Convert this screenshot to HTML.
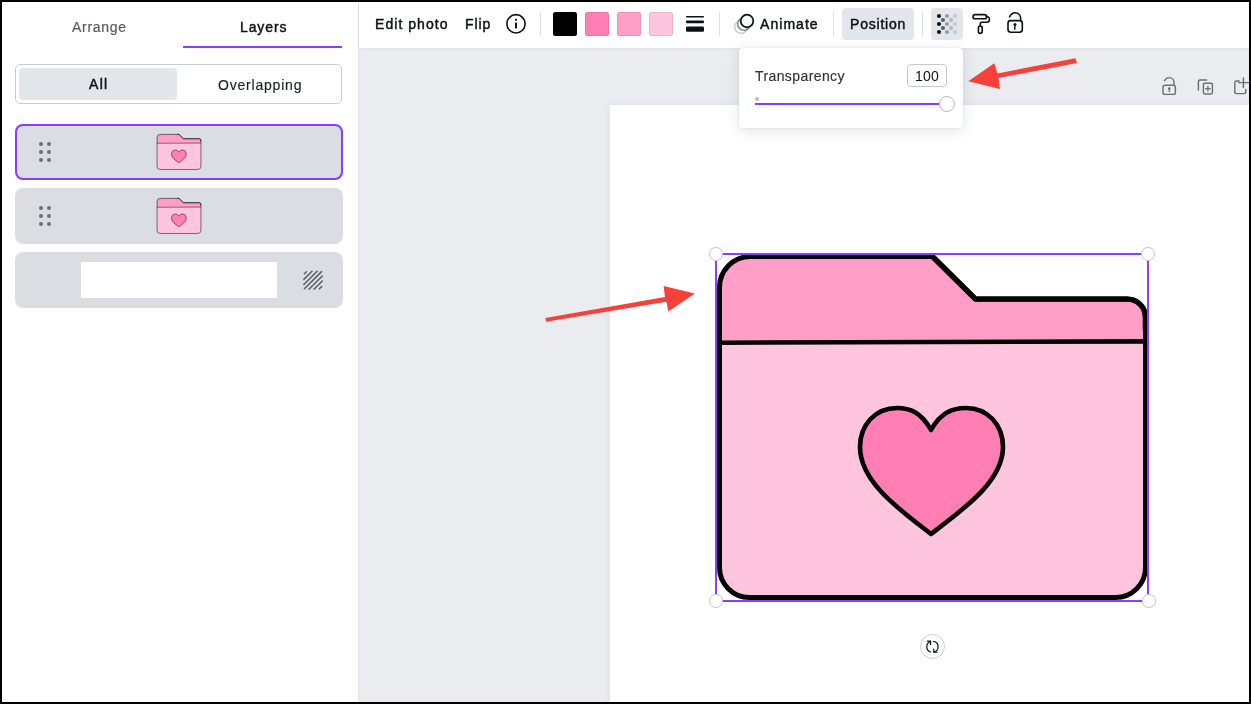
<!DOCTYPE html>
<html><head><meta charset="utf-8">
<style>
*{box-sizing:border-box;margin:0;padding:0}
html,body{width:1251px;height:704px;overflow:hidden;background:#ebecf0}
body{position:relative;font-family:"Liberation Sans",sans-serif;color:#0d1216}
.abs{position:absolute}
#border{position:absolute;left:0;top:0;width:1251px;height:704px;border:2px solid #000;z-index:50}
#left{position:absolute;left:0;top:0;width:359px;height:704px;background:#fff;border-right:1px solid #e3e5e8}
#toolbar{position:absolute;left:359px;top:0;width:892px;height:48px;background:#fff;box-shadow:0 1px 4px rgba(0,0,0,.05)}
.t{position:absolute;white-space:nowrap;line-height:1;will-change:transform}
.sep{position:absolute;width:1px;height:24px;top:12px;background:#dcdfe3}
.sw{position:absolute;top:12px;width:24px;height:24px;border-radius:2.5px;box-shadow:inset 0 0 0 1px rgba(0,0,0,.08)}
.item{position:absolute;left:15px;width:328px;height:56px;border-radius:8px;background:#dadde1}
.handle{width:14px;height:14px;border-radius:50%;background:#fff;border:1.3px solid #c3c7cd;box-shadow:0 0 3px rgba(0,0,0,.05)}
.dot{position:absolute;width:4px;height:4px;border-radius:50%;background:#6b7078}
</style></head>
<body>
<svg width="0" height="0" style="position:absolute">
  <defs>
    <g id="folder">
      <path d="M719.5,342.7 L719.5,287.5 A31,31 0 0 1 750.5,256.5 L932,256.5 L975,299 L1127.5,299 A18,18 0 0 1 1145.5,317 L1145.5,341.4 Z" fill="#ff9fc8"/>
      <path d="M719.5,342.7 L1145.5,341.4 L1145.5,567.5 A30,30 0 0 1 1115.5,597.5 L749.5,597.5 A30,30 0 0 1 719.5,567.5 Z" fill="#ffc4de"/>
      <path d="M750.5,256.5 L932,256.5 L975,299 L1127.5,299 A18,18 0 0 1 1145.5,317 L1145.5,567.5 A30,30 0 0 1 1115.5,597.5 L749.5,597.5 A30,30 0 0 1 719.5,567.5 L719.5,287.5 A31,31 0 0 1 750.5,256.5 Z" fill="none" stroke="#000" stroke-width="5" stroke-linejoin="round"/>
      <path d="M719.5,342.7 L1145.5,341.4" stroke="#000" stroke-width="4.6"/>
      <path d="M915,256.5 L932.8,256.5 L975.8,299.2 L1127.5,299.2 A18,18 0 0 1 1145.3,317.2 L1145.3,330" fill="none" stroke="#000" stroke-width="5.2" stroke-linejoin="miter"/>
      <path d="M931,430 C921,412 910,408 897,408 C875,408 860,425 860,447 C860,482 900,510 931,534 C962,510 1003,482 1003,447 C1003,425 988,408 966,408 C953,408 941,412 931,430 Z" fill="#ff7eb4" stroke="#000" stroke-width="4.6" stroke-linejoin="round"/>
    </g>
  </defs>
</svg>

<!-- LEFT PANEL -->
<div id="left">
  <div class="t" style="left:72px;top:20px;font-size:14px;color:#575c62;-webkit-text-stroke:.2px #575c62;letter-spacing:.7px">Arrange</div>
  <div class="t" style="left:240px;top:20px;font-size:14px;-webkit-text-stroke:.45px #0d1216;color:#0d1216;letter-spacing:.9px">Layers</div>
  <div class="abs" style="left:183px;top:46px;width:159px;height:2px;background:#8b3dff"></div>

  <div class="abs" style="left:15px;top:64px;width:327px;height:40px;border:1px solid #c9cdd2;border-radius:5px"></div>
  <div class="abs" style="left:19px;top:68px;width:158px;height:32px;background:#e3e6ea;border-radius:4px"></div>
  <div class="t" style="left:89px;top:77px;font-size:14px;-webkit-text-stroke:.45px #0d1216;letter-spacing:1.3px">All</div>
  <div class="t" style="left:218px;top:78px;font-size:14px;letter-spacing:.8px;color:#1a1f24;-webkit-text-stroke:.15px #1a1f24">Overlapping</div>

  <div class="item" style="top:124px;box-shadow:inset 0 0 0 2px #8b3dff"></div>
  <div class="item" style="top:188px"></div>
  <div class="item" style="top:252px"></div>

  <div class="dot" style="left:39px;top:142px"></div><div class="dot" style="left:47px;top:142px"></div>
  <div class="dot" style="left:39px;top:150px"></div><div class="dot" style="left:47px;top:150px"></div>
  <div class="dot" style="left:39px;top:158px"></div><div class="dot" style="left:47px;top:158px"></div>

  <div class="dot" style="left:39px;top:206px"></div><div class="dot" style="left:47px;top:206px"></div>
  <div class="dot" style="left:39px;top:214px"></div><div class="dot" style="left:47px;top:214px"></div>
  <div class="dot" style="left:39px;top:222px"></div><div class="dot" style="left:47px;top:222px"></div>

  <svg class="abs" style="left:156px;top:133px" width="46" height="37" viewBox="709.2 243.3 446.6 359.2"><use href="#folder"/></svg>
  <svg class="abs" style="left:156px;top:197px" width="46" height="37" viewBox="709.2 243.3 446.6 359.2"><use href="#folder"/></svg>

  <div class="abs" style="left:81px;top:262px;width:196px;height:35.5px;background:#fff"></div>
  <svg class="abs" style="left:302px;top:269.5px" width="22" height="22" viewBox="0 0 22 22">
    <g stroke="#5b6068" stroke-width="1.5" stroke-linecap="round">
      <path d="M2.4,3.8 L4.4,1.8 M1.8,9.4 L10,1.2 M1.8,14.5 L15.1,1.2 M2.4,18.7 L19.6,1.6 M7,19.3 L20.3,6 M12,19.3 L20.3,11 M17.4,18.8 L19.6,16.6"/>
    </g>
  </svg>
</div>

<!-- TOOLBAR -->
<div id="toolbar"></div>
<div class="t" style="left:375px;top:17px;font-size:14px;-webkit-text-stroke:.45px #0d1216;letter-spacing:1.05px">Edit photo</div>
<div class="t" style="left:465px;top:17px;font-size:14px;-webkit-text-stroke:.45px #0d1216;letter-spacing:.95px">Flip</div>
<svg class="abs" style="left:505px;top:13px" width="22" height="22" viewBox="0 0 22 22">
  <circle cx="11" cy="10.8" r="9.15" fill="none" stroke="#0d1216" stroke-width="1.6"/>
  <circle cx="11" cy="6.8" r="1.1" fill="#0d1216"/>
  <rect x="10.05" y="9.4" width="1.9" height="6.2" rx=".5" fill="#0d1216"/>
</svg>
<div class="sep" style="left:540px"></div>
<div class="sw" style="left:553px;background:#000"></div>
<div class="sw" style="left:585px;background:#ff7eb4"></div>
<div class="sw" style="left:617px;background:#ff9fc8"></div>
<div class="sw" style="left:649px;background:#ffc4de"></div>
<svg class="abs" style="left:684px;top:14px" width="22" height="20" viewBox="0 0 22 20">
  <g fill="#0d1216"><rect x="2" y="2" width="18" height="1.6" rx=".7"/><rect x="2" y="6.5" width="18" height="2.8" rx="1.1"/><rect x="2" y="12.5" width="18" height="5.2" rx="1.3"/></g>
</svg>
<div class="sep" style="left:719px"></div>
<svg class="abs" style="left:730px;top:10px" width="28" height="28" viewBox="0 0 28 28">
  <circle cx="11" cy="17" r="6.4" fill="none" stroke="#c4c6c9" stroke-width="1.4"/>
  <circle cx="14" cy="14" r="6.4" fill="none" stroke="#7d8085" stroke-width="1.4"/>
  <circle cx="17" cy="11" r="6.3" fill="#fff" stroke="#0d1216" stroke-width="1.7"/>
</svg>
<div class="t" style="left:760px;top:17px;font-size:14px;-webkit-text-stroke:.45px #0d1216;letter-spacing:1.05px">Animate</div>
<div class="sep" style="left:833px"></div>
<div class="abs" style="left:842px;top:8px;width:72px;height:32px;border-radius:4px;background:#e3e6ea"></div>
<div class="t" style="left:850px;top:17px;font-size:14px;-webkit-text-stroke:.45px #0d1216;letter-spacing:.8px">Position</div>
<div class="sep" style="left:922px"></div>
<div class="abs" style="left:931px;top:8px;width:32px;height:32px;border-radius:4px;background:#e3e6ea"></div>
<svg class="abs" style="left:931px;top:8px" width="32" height="32" viewBox="0 0 32 32">
  <g>
    <circle cx="8" cy="8" r="2.1" fill="#0d1216"/><circle cx="8" cy="16" r="2.1" fill="#0d1216"/><circle cx="8" cy="24" r="2.1" fill="#0d1216"/>
    <circle cx="12" cy="12" r="2.1" fill="#5d6167"/><circle cx="12" cy="20" r="2.1" fill="#5d6167"/>
    <circle cx="16" cy="8" r="2.1" fill="#9a9da1"/><circle cx="16" cy="16" r="2.1" fill="#9a9da1"/><circle cx="16" cy="24" r="2.1" fill="#9a9da1"/>
    <circle cx="20" cy="12" r="2.1" fill="#b3b6b9"/><circle cx="20" cy="20" r="2.1" fill="#b3b6b9"/>
    <circle cx="24" cy="8" r="2.1" fill="#c8cacd"/><circle cx="24" cy="16" r="2.1" fill="#c8cacd"/><circle cx="24" cy="24" r="2.1" fill="#c8cacd"/>
  </g>
</svg>
<svg class="abs" style="left:968px;top:10px" width="26" height="28" viewBox="968 10 26 28">
  <g fill="none" stroke="#0d1216" stroke-width="1.6" stroke-linejoin="round" stroke-linecap="round">
    <rect x="973" y="14.6" width="13.6" height="4.2" rx="2.1"/>
    <path d="M986.4,16.6 C989.2,16.6 989.4,17.6 989.4,19.5 C989.4,21.6 988.8,22.2 986.8,22.2 L981.8,22.2 C980.6,22.2 980.3,22.8 980.3,24 L980.3,26"/>
    <rect x="978.4" y="26" width="3.8" height="7.4" rx="1.9"/>
  </g>
</svg>
<svg class="abs" style="left:1003px;top:8px" width="24" height="28" viewBox="1003 8 24 28">
  <g fill="none" stroke="#0d1216" stroke-width="1.6" stroke-linecap="round">
    <rect x="1008" y="20.6" width="14.3" height="11.6" rx="2.6"/>
    <path d="M1009.6,16.8 C1010.8,14.4 1012.7,12.8 1015,12.8 C1018.4,12.8 1020.7,15.4 1020.7,18.8 L1020.7,20.6"/>
  </g>
  <circle cx="1015" cy="24.6" r="1.5" fill="#0d1216"/>
  <path d="M1015,25 L1014.8,29.2" stroke="#0d1216" stroke-width="1.4" stroke-linecap="round"/>
</svg>

<!-- PAGE -->
<div class="abs" style="left:610px;top:105px;width:700px;height:700px;background:#fff;box-shadow:0 0 8px rgba(0,0,0,.06)"></div>

<!-- FOLDER -->
<svg class="abs" style="left:0;top:0" width="1251" height="704"><use href="#folder"/></svg>


<!-- SELECTION -->
<div class="abs" style="left:715px;top:253px;width:434px;height:349px;border:2px solid #8b3dff"></div>
<div class="abs handle" style="left:709.2px;top:246.6px"></div>
<div class="abs handle" style="left:1141.3px;top:246.5px"></div>
<div class="abs handle" style="left:709.3px;top:593.7px"></div>
<div class="abs handle" style="left:1141.5px;top:593.5px"></div>
<div class="abs" style="left:919.5px;top:634px;width:25px;height:25px;border-radius:50%;background:#fff;border:1.2px solid #c8ccd2"></div>
<svg class="abs" style="left:917px;top:632px" width="30" height="30" viewBox="917 632 30 30">
  <g fill="none" stroke="#0d1216" stroke-width="1.2" stroke-linecap="round" stroke-linejoin="round">
    <path d="M930.6,641.4 A5.6,5.6 0 0 0 930.6,652"/>
    <path d="M933.6,641.4 A5.4,5.4 0 0 1 933.8,652"/>
    <path d="M927.4,641.2 H930.6 V644.4"/>
    <path d="M933.8,649 V652.2 H937"/>
  </g>
</svg>

<!-- PAGE TOOLS -->
<svg class="abs" style="left:1155px;top:72px" width="96" height="28" viewBox="1155 72 96 28">
  <g fill="none" stroke="#6b7078" stroke-width="1.45" stroke-linecap="round" stroke-linejoin="round">
    <rect x="1163" y="85.2" width="12.4" height="9.2" rx="2"/>
    <path d="M1164.6,80.6 C1165.6,78.6 1167.2,77.6 1169.2,77.6 C1172,77.6 1174,79.8 1174,82.6 L1174,85.2"/>
    <path d="M1198.4,90 L1198.4,81.6 C1198.4,80.6 1199,80 1200,80 L1206.6,80"/>
    <rect x="1203.4" y="83.2" width="9" height="10.8" rx="1.4"/>
    <path d="M1207.9,86.4 V91 M1205.6,88.7 H1210.2" stroke-width="1.3"/>
    <path d="M1239.2,81 L1236.6,81 C1235.4,81 1234.8,81.6 1234.8,82.8 L1234.8,91.8 C1234.8,93 1235.4,93.6 1236.6,93.6 L1244,93.6 C1245.2,93.6 1245.8,93 1245.8,91.8 L1245.8,89.4"/>
    <path d="M1243.4,78 V87.4 M1238.6,82.6 H1249"/>
  </g>
  <circle cx="1169.3" cy="88.6" r="1.3" fill="#6b7078"/>
  <path d="M1169.3,89 V91.6" stroke="#6b7078" stroke-width="1.3" stroke-linecap="round"/>
</svg>

<!-- POPOVER -->
<div class="abs" style="left:739px;top:48px;width:224px;height:80px;background:#fff;border-radius:4px;box-shadow:0 0 0 1px rgba(64,87,109,.04),0 3px 14px rgba(53,71,90,.15)"></div>
<div class="t" style="left:755px;top:69px;font-size:14px;color:#2f3338;-webkit-text-stroke:.15px #2f3338;letter-spacing:.4px">Transparency</div>
<div class="abs" style="left:907px;top:64px;width:40px;height:23px;border:1px solid #c4c8ce;border-radius:4px;background:#fff"></div>
<div class="t" style="left:915px;top:69px;font-size:14px;color:#0d1216;letter-spacing:.2px">100</div>
<div class="abs" style="left:755px;top:102.5px;width:192px;height:2px;background:#8b3dff"></div>
<div class="abs" style="left:755px;top:96.5px;width:4px;height:4px;border-radius:50%;background:#b8bcc2"></div>
<div class="abs" style="left:938.7px;top:95.8px;width:16px;height:16px;border-radius:50%;background:#fff;border:1px solid #b7bbc1"></div>

<!-- ARROWS -->
<svg class="abs" style="left:0;top:0" width="1251" height="704">
  <g fill="#f6403a">
    <path d="M1075.4,58.3 L1077,63 L998.5,78 L1000,89 L968.3,81.2 L994.3,63.3 L997.4,73.4 Z"/>
    <path d="M545.4,318 L546.1,321.8 L666.4,301.7 L668.4,311.5 L694.9,293.6 L663.6,286.1 L665,297 Z"/>
  </g>
</svg>
<div id="border"></div>
</body></html>
